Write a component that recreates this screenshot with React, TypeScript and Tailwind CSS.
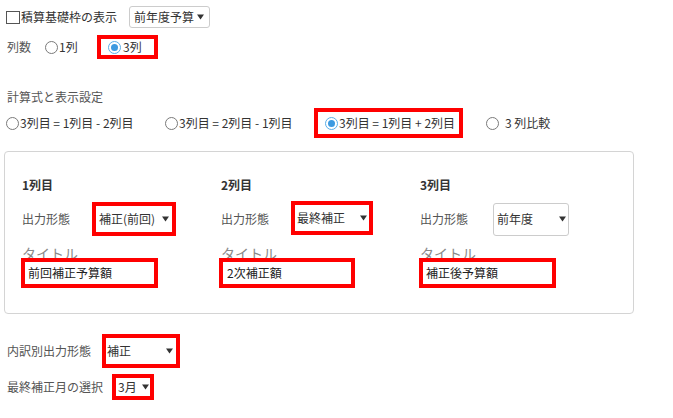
import React from "react";

const Arrow = () => (
  <svg width="7" height="6" viewBox="0 0 7 6" className="shrink-0">
    <path d="M0 0.5 L7 0.5 L3.5 5.5 Z" fill="#333" />
  </svg>
);

const Radio = ({ checked = false }: { checked?: boolean }) =>
  checked ? (
    <span className="w-[13px] h-[13px] rounded-full border-[1.5px] border-[#5aaee8] flex items-center justify-center shrink-0 bg-white">
      <span className="w-[7px] h-[7px] rounded-full bg-[#3d9ae0]" />
    </span>
  ) : (
    <span className="w-[13px] h-[13px] rounded-full border border-[#7a7a7a] shrink-0 bg-white" />
  );

export default function App() {
  return (
    <div className="w-[673px] h-[418px] overflow-hidden bg-white text-[12px] text-[#333] font-['Noto_Sans_CJK_JP','Noto_Sans',sans-serif] leading-none">
      {/* Row 1 */}
      <div className="h-[34px] flex items-center pl-[6px]">
        <span className="w-[14px] h-[13px] border border-[#555] bg-white shrink-0" />
        <span className="ml-[1px] w-[108px]">積算基礎枠の表示</span>
        <div className="w-[81px] h-[22px] border border-[#ccc] rounded-[3px] flex items-center justify-between pl-[4px] pr-[5px]">
          <span>前年度予算</span>
          <Arrow />
        </div>
      </div>

      {/* Row 2 */}
      <div className="h-[26px] flex items-center pl-[7px]">
        <span className="w-[38px] text-[#555]">列数</span>
        <Radio />
        <span className="ml-[1px] w-[38px]">1列</span>
        <div className="w-[61px] h-[24px] border-[4px] border-[#ff0000] flex items-center pl-[7px]">
          <Radio checked />
          <span className="ml-[2px]">3列</span>
        </div>
      </div>

      {/* Row 3 */}
      <div className="mt-[28px] h-[18px] flex items-center pl-[7px] text-[#555]">計算式と表示設定</div>

      {/* Row 4 */}
      <div className="mt-[2px] h-[30px] flex items-center pl-[6px]">
        <div className="w-[159px] flex items-center">
          <Radio />
          <span className="ml-[1px]">3列目 = 1列目 - 2列目</span>
        </div>
        <div className="w-[149px] flex items-center">
          <Radio />
          <span className="ml-[1px]">3列目 = 2列目 - 1列目</span>
        </div>
        <div className="w-[149px] h-[30px] border-[4px] border-[#ff0000] flex items-center pl-[7px]">
          <Radio checked />
          <span className="ml-[1px]">3列目 = 1列目 + 2列目</span>
        </div>
        <div className="ml-[23px] flex items-center">
          <Radio />
          <span className="ml-[6px]">3 列比較</span>
        </div>
      </div>

      {/* Panel */}
      <div className="mt-[13px] ml-[4px] w-[630px] h-[163px] border border-[#d4d4d4] rounded-[4px] pl-[17px] pt-[26px] grid grid-cols-[199px_199px_199px]">
        {/* col 1 */}
        <div className="flex flex-col">
          <div className="h-[14px] flex items-center font-bold text-[#333]">1列目</div>
          <div className="mt-[9px] h-[35px] flex items-center">
            <span className="w-[70px] text-[#555]">出力形態</span>
            <div className="w-[84px] h-[34px] border-[4px] border-[#ff0000] flex items-center justify-between pl-[3px] pr-[3px]">
              <span>補正(前回)</span>
              <Arrow />
            </div>
          </div>
          <div className="mt-[9px] h-[16px] leading-[16px] text-[14px] text-[#8a8a8a]">タイトル</div>
          <div className="mt-[-3px] ml-[-1px] w-[137px] h-[30px] border-[4px] border-[#ff0000] bg-white flex items-center pl-[3px] text-[#222]">
            前回補正予算額
          </div>
        </div>
        {/* col 2 */}
        <div className="flex flex-col">
          <div className="h-[14px] flex items-center font-bold text-[#333]">2列目</div>
          <div className="mt-[9px] h-[35px] flex items-center">
            <span className="w-[70px] text-[#555]">出力形態</span>
            <div className="mt-[-1px] w-[82px] h-[34px] border-[4px] border-[#ff0000] flex items-center justify-between pl-[2px] pr-[2px]">
              <span>最終補正</span>
              <Arrow />
            </div>
          </div>
          <div className="mt-[9px] h-[16px] leading-[16px] text-[14px] text-[#8a8a8a]">タイトル</div>
          <div className="mt-[-3px] ml-[-2px] w-[136px] h-[30px] border-[4px] border-[#ff0000] bg-white flex items-center pl-[4px] text-[#222]">
            2次補正額
          </div>
        </div>
        {/* col 3 */}
        <div className="flex flex-col">
          <div className="h-[14px] flex items-center font-bold text-[#333]">3列目</div>
          <div className="mt-[9px] h-[35px] flex items-center">
            <span className="w-[73px] text-[#555]">出力形態</span>
            <div className="mt-[1px] w-[76px] h-[33px] border border-[#ccc] rounded-[3px] flex items-center justify-between pl-[3px] pr-[2px]">
              <span>前年度</span>
              <Arrow />
            </div>
          </div>
          <div className="mt-[9px] h-[16px] leading-[16px] text-[14px] text-[#8a8a8a]">タイトル</div>
          <div className="mt-[-3px] ml-[-1px] w-[137px] h-[30px] border-[4px] border-[#ff0000] bg-white flex items-center pl-[3px] text-[#222]">
            補正後予算額
          </div>
        </div>
      </div>

      {/* Bottom rows */}
      <div className="mt-[20px] h-[34px] flex items-center pl-[7px]">
        <span className="w-[95px] text-[#555]">内訳別出力形態</span>
        <div className="w-[78px] h-[34px] border-[4px] border-[#ff0000] flex items-center justify-between pl-[1px] pr-[3px]">
          <span>補正</span>
          <Arrow />
        </div>
      </div>
      <div className="mt-[6px] h-[26px] flex items-center pl-[7px]">
        <span className="w-[105px] text-[#555]">最終補正月の選択</span>
        <div className="w-[42px] h-[26px] border-[4px] border-[#ff0000] flex items-center justify-between pl-[2px] pr-[1px]">
          <span>3月</span>
          <Arrow />
        </div>
      </div>
    </div>
  );
}
